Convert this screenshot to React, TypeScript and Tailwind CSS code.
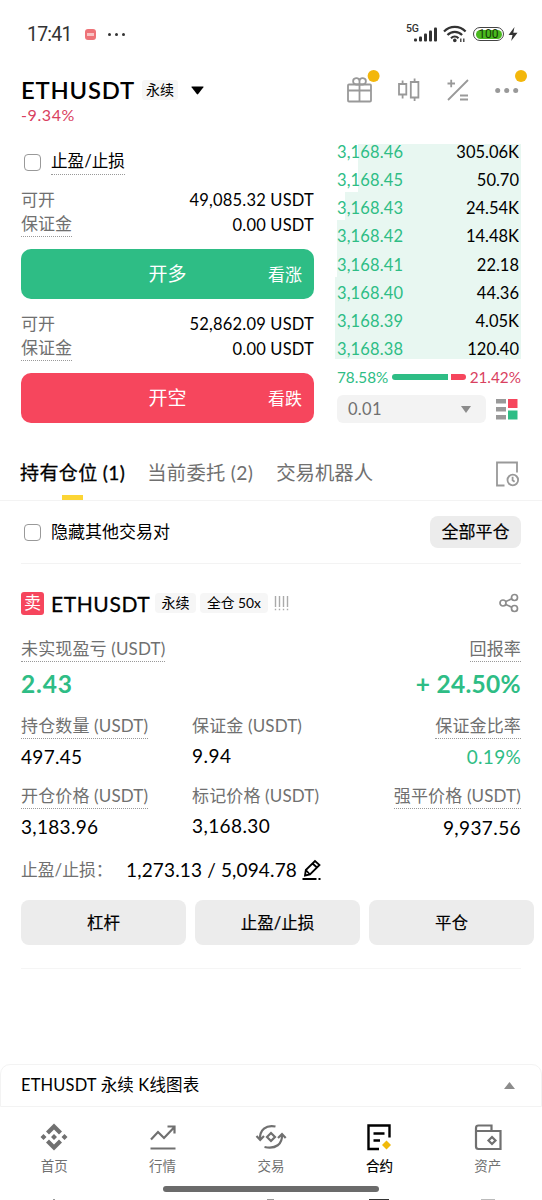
import React from "react";

type Order = { price: string; amount: string; bar: string };

const orders: Order[] = [
  { price: "3,168.46", amount: "305.06K", bar: "w-[163px]" },
  { price: "3,168.45", amount: "50.70", bar: "w-[163px]" },
  { price: "3,168.43", amount: "24.54K", bar: "w-[176px]" },
  { price: "3,168.42", amount: "14.48K", bar: "w-[184px]" },
  { price: "3,168.41", amount: "22.18", bar: "w-[184px]" },
  { price: "3,168.40", amount: "44.36", bar: "w-[186px]" },
  { price: "3,168.39", amount: "4.05K", bar: "w-[186px]" },
  { price: "3,168.38", amount: "120.40", bar: "w-[186px]" },
];

const Checkbox = () => (
  <span className="block size-[17px] shrink-0 rounded-[4px] border-[1.5px] border-[#999]" />
);

const StatusBar = () => (
  <div className="flex h-[68px] items-center pl-[27px] pr-[24px] text-[#333]">
    <span className="w-[58px] pt-[2px] font-[Roboto] text-[19.5px] tracking-[-0.8px]">17:41</span>
    <span className="flex h-[11px] w-[11px] items-center justify-center rounded-[3px] bg-[#ee7378]">
      <span className="h-[3px] w-[7px] bg-[#f9c4c4]" />
    </span>
    <span className="ml-[12px] flex gap-[4px]">
      <i className="size-[3px] rounded-full bg-[#333]" />
      <i className="size-[3px] rounded-full bg-[#333]" />
      <i className="size-[3px] rounded-full bg-[#333]" />
    </span>
    <span className="ml-auto mb-[9px] font-[Roboto] text-[10.5px] font-medium leading-none">5G</span>
    <svg className="-ml-[5px]" width="23" height="15" viewBox="0 0 23 15" fill="#333">
      <rect x="0" y="11.5" width="3" height="3" rx="1" />
      <rect x="5" y="9.5" width="3" height="5" rx="1" />
      <rect x="10" y="6.5" width="3" height="8" rx="1" />
      <rect x="15" y="3.5" width="3" height="11" rx="1" />
      <rect x="20" y="0.5" width="3" height="14" rx="1" />
    </svg>
    <svg className="ml-[6px]" width="24" height="18" viewBox="0 0 24 18" fill="none" stroke="#333" strokeWidth="2.2">
      <path d="M1 6.5a15 15 0 0 1 21.6 0M4.5 10a10 10 0 0 1 14.6 0M8 13.2a5.5 5.5 0 0 1 7.5 0" />
      <circle cx="11.8" cy="15.4" r="1.8" fill="#333" stroke="none" />
      <path d="M17.8 13.5v3.5M20.8 13.5v3.5" strokeWidth="1.3" />
    </svg>
    <span className="ml-[6px] flex h-[14px] w-[31px] items-center rounded-full border-[1.3px] border-[#444] p-[1.5px]">
      <span className="flex h-full w-full items-center justify-center rounded-full bg-[#49b81e] font-[Roboto] text-[12px] leading-none text-[#15380a]">
        100
      </span>
    </span>
    <svg className="ml-[4px]" width="10" height="16" viewBox="0 0 10 16" fill="#333">
      <path d="M6.5 1L0.5 9H4.5L3.2 15L9.5 6.8H5.3Z" />
    </svg>
  </div>
);

const Header = () => (
  <div className="flex h-[76px] justify-between pl-[21px] pr-[15px]">
    <div>
      <div className="mt-[9px] flex h-[26px] items-center">
        <h1 className="w-[121px] pt-px text-[23.8px] font-semibold leading-none tracking-[0.8px]">ETHUSDT</h1>
        <span className="flex h-[20px] w-[36px] items-center justify-center rounded-[3px] bg-[#f6f6f6] pb-px text-[14px]">
          永续
        </span>
        <svg className="ml-[13px]" width="13" height="9" viewBox="0 0 13 9">
          <path d="M1 .5h11q1 0 .4.8L7.2 8q-.7.8-1.4 0L.6 1.3Q0 .5 1 .5z" />
        </svg>
      </div>
      <p className="mt-[3px] text-[16px] leading-[18px] tracking-[0.6px] text-[#d9415f]">-9.34%</p>
    </div>
    <svg width="182" height="40" viewBox="345 68 182 40" fill="none" stroke="#999" strokeWidth="1.8">
      <rect x="348" y="84.5" width="23" height="17" rx="1" />
      <path d="M348 90.5h23M359.5 84.5v17M359.5 84.5h-3a3.2 3.2 0 1 1 3-3.5zM359.5 84.5h3a3.2 3.2 0 1 0-3-3.5" />
      <path d="M399 84h7.3v10.5H399zM402.6 80.5V84M402.6 94.5V98.5M410.8 82h7.6v15.5h-7.6zM414.6 78.5V82M414.6 97.5v3.5" />
      <path d="M448 100L468 80M447.5 83.5h7.5M451.2 79.8v7.5M460 95.5h8M460 99.5h8" />
      <g stroke="none" fill="#999">
        <circle cx="497.7" cy="90.5" r="2.5" />
        <circle cx="506.7" cy="90.5" r="2.5" />
        <circle cx="515.7" cy="90.5" r="2.5" />
      </g>
      <g stroke="none" fill="#f3b70c">
        <circle cx="373.6" cy="76" r="6" />
        <circle cx="521" cy="76" r="6" />
      </g>
    </svg>
  </div>
);

type TradeSideProps = {
  available: string;
  label: string;
  hint: string;
  color: string;
};

const TradeSide = ({ available, label, hint, color }: TradeSideProps) => (
  <div>
    <div className="flex h-[25px] items-center justify-between text-[17px]">
      <span className="text-[#707070]">可开</span>
      <span className="pt-[2px] text-[16.5px] tracking-[0.2px]">{available} USDT</span>
    </div>
    <div className="flex h-[25px] items-center justify-between text-[17px]">
      <span className="border-b border-dotted border-[#999] leading-[24px] text-[#707070]">保证金</span>
      <span className="pt-[2px] text-[16.5px] tracking-[0.2px]">0.00 USDT</span>
    </div>
    <button
      className={`mt-[12px] grid h-[50px] w-full grid-cols-3 items-center rounded-[10px] pt-px text-white ${color}`}
    >
      <span className="col-start-2 text-[19px]">{label}</span>
      <span className="pr-[12px] text-right text-[17px]">{hint}</span>
    </button>
  </div>
);

const OrderBook = () => (
  <div className="w-[186px]">
    <div className="h-[215px] overflow-hidden">
      {orders.map((o) => (
        <div
          key={o.price}
          className="relative flex h-[28.15px] items-center justify-between px-[2px] pt-[5px] text-[16.5px] leading-[15px] first:h-[20.15px] first:pb-[3px] first:pt-0"
        >
          <span className={`absolute inset-y-0 right-0 bg-[#e8f7f1] ${o.bar}`} />
          <span className="relative tracking-[0.15px] text-[#2ebd85]">{o.price}</span>
          <span className="relative">{o.amount}</span>
        </div>
      ))}
    </div>
    <div className="mt-[8px] flex h-[20px] items-center pl-[2px] text-[15.3px]">
      <span className="w-[55px] whitespace-nowrap text-[#2ebd85]">78.58%</span>
      <span className="h-[6px] w-[56px] rounded-l-full bg-[#2ebd85]" />
      <span className="ml-[3px] h-[6px] w-[15px] rounded-r-full bg-[#f6465d]" />
      <span className="ml-auto text-[#d9415f]">21.42%</span>
    </div>
    <div className="mt-[8px] flex items-center pl-[2px]">
      <div className="flex h-[28px] w-[149px] items-center justify-between rounded-[6px] bg-[#f3f3f3] pl-[11px] pr-[15px] text-[16.5px] tracking-[0.3px] text-[#707070]">
        0.01
        <svg width="10" height="7" viewBox="0 0 10 7" fill="#8c8c8c">
          <path d="M0 0h10L5 7z" />
        </svg>
      </div>
      <svg className="ml-[10px]" width="22" height="22" viewBox="0 0 22 22" fill="#999">
        <path d="M0 1h10v4.5H0zM0 9h10v4.5H0zM0 17h10v4.5H0z" />
        <path d="M12 1h9.5v9H12z" fill="#f6465d" />
        <path d="M12 12.5h9.5v9H12z" fill="#2ebd85" />
      </svg>
    </div>
  </div>
);

type MetricProps = {
  label: string;
  value: string;
  align?: string;
  dotted?: boolean;
  valueStyle?: string;
};

const Metric = ({
  label,
  value,
  align = "items-start",
  dotted = true,
  valueStyle = "mt-[4px] text-[19px] tracking-[0.3px]",
}: MetricProps) => (
  <div className={`flex flex-col ${align}`}>
    <span
      className={`whitespace-nowrap border-b border-dotted text-[17px] leading-[25px] tracking-[0.15px] text-[#707070] ${
        dotted ? "border-[#999]" : "border-transparent"
      }`}
    >
      {label}
    </span>
    <span className={`leading-[28px] ${valueStyle}`}>{value}</span>
  </div>
);

const Position = () => (
  <section className="pl-[21px]">
    <div className="mt-[25px] flex h-[28px] items-center pr-[23px]">
      <span className="flex size-[23px] items-center justify-center rounded-[3px] bg-[#f6465d] text-[17px] text-white">卖</span>
      <h2 className="ml-[7px] w-[104px] text-[21px] leading-none tracking-[0.6px] [-webkit-text-stroke:0.3px_black]">
        ETHUSDT
      </h2>
      <span className="flex h-[20px] w-[41px] items-center justify-center rounded-[4px] bg-[#f6f6f6] pb-px text-[14px]">永续</span>
      <span className="ml-[4px] flex h-[20px] w-[68px] items-center justify-center rounded-[4px] bg-[#f6f6f6] text-[13.8px]">
        全仓 50x
      </span>
      <svg className="ml-[6px]" width="15" height="15" viewBox="0 0 15 15" stroke="#aaa" strokeWidth="1.4">
        <path d="M1.5 0v11M5.5 0v11M9.5 0v11M13.5 0v11M1.5 12.7v1.6M5.5 12.7v1.6M9.5 12.7v1.6M13.5 12.7v1.6" />
      </svg>
      <svg className="ml-auto" width="20" height="20" viewBox="0 0 20 20" fill="none" stroke="#8c8c8c" strokeWidth="1.7">
        <circle cx="4" cy="10" r="3" />
        <circle cx="15.5" cy="4.5" r="3" />
        <circle cx="15.5" cy="15.5" r="3" />
        <path d="M6.8 8.6l6-2.9M6.8 11.4l6 2.9" />
      </svg>
    </div>
    <div className="mt-[19px] flex justify-between pr-[21px]">
      <Metric
        label="未实现盈亏 (USDT)"
        value="2.43"
        valueStyle="mt-[8px] mb-px text-[24.5px] font-bold tracking-[0.8px] text-[#2ebd85]"
      />
      <Metric
        label="回报率"
        value="+ 24.50%"
        align="items-end"
        valueStyle="mt-[8px] mb-px text-[24.5px] font-bold tracking-[0.3px] text-[#2ebd85]"
      />
    </div>
    <div className="mt-[14px] grid grid-cols-[171px_180px_149px] gap-y-[12px]">
      <Metric label="持仓数量 (USDT)" value="497.45" />
      <Metric label="保证金 (USDT)" value="9.94" dotted={false} valueStyle="mt-[3px] text-[19px] tracking-[0.5px]" />
      <Metric
        label="保证金比率"
        value="0.19%"
        align="items-end"
        valueStyle="mt-[4px] text-[19px] tracking-[0.3px] text-[#2ebd85]"
      />
      <Metric label="开仓价格 (USDT)" value="3,183.96" />
      <Metric
        label="标记价格 (USDT)"
        value="3,168.30"
        dotted={false}
        valueStyle="mt-[3px] text-[19px] tracking-[0.4px]"
      />
      <Metric
        label="强平价格 (USDT)"
        value="9,937.56"
        align="items-end"
        valueStyle="mt-[5px] text-[19px] tracking-[0.4px]"
      />
    </div>
    <div className="mt-[14px] flex h-[28px] items-center">
      <span className="w-[105px] text-[16.8px] text-[#707070]">止盈/止损：</span>
      <span className="text-[19px] tracking-[0.15px]">1,273.13 / 5,094.78</span>
      <svg className="ml-[5px]" width="20" height="22" viewBox="0 0 20 22" fill="none" stroke="#000" strokeWidth="1.8">
        <path d="M3 16.500l.8-5.500L13 2l4.500 4-9.500 9.500zM10.500 4.500l4.500 4M0.500 20h14M16.500 20h2M3.800 11l4.200 4.500" />
      </svg>
    </div>
    <div className="mt-[16px] grid grid-cols-3 gap-[9px] pr-[8px] text-[16.5px] [-webkit-text-stroke:0.2px_black]">
      <button className="h-[45px] rounded-[8px] bg-[#ececec] pt-px">杠杆</button>
      <button className="h-[45px] rounded-[8px] bg-[#ececec] pt-px">止盈/止损</button>
      <button className="h-[45px] rounded-[8px] bg-[#ececec] pt-px">平仓</button>
    </div>
    <div className="mr-[21px] mt-[23px] h-px bg-[#f5f5f5]" />
  </section>
);

const HomeIcon = () => (
  <svg width="28" height="28" viewBox="0 0 28 28" fill="#707070">
    <path d="M14 0.5L22 8.5L19 11.5L14 6.5L9 11.5L6 8.5zM14 27.5L22 19.5L19 16.5L14 21.5L9 16.5L6 19.5zM14 11l3 3-3 3-3-3zM3.5 11l3 3-3 3-3-3zM24.5 11l3 3-3 3-3-3z" />
  </svg>
);

const MarketIcon = () => (
  <svg width="28" height="28" viewBox="0 0 28 28" fill="none" stroke="#707070" strokeWidth="2.2">
    <path d="M2 16.5l7-7.5 6 6L25 4.5M18.5 3.5H25.5V10.5M1.5 25.5h25" />
  </svg>
);

const TradeIcon = () => (
  <svg width="32" height="28" viewBox="0 0 32 28" fill="none" stroke="#707070" strokeWidth="2.2">
    <path d="M5 16.5C4.5 7 11 1.5 20.5 3.5M1.5 13L5.2 17 9 13M27 11.5C27.5 21 21 26.5 9.5 24M23 15l4-4 3.7 4M16 10l4 4-4 4-4-4z" />
  </svg>
);

const FuturesIcon = () => (
  <svg width="28" height="28" viewBox="0 0 28 28" fill="none" stroke="#000" strokeWidth="2.4">
    <path d="M24.5 14.5V2.5H3.5V26H14M8.5 10.5h11M8.5 17.5h6.5" />
    <path d="M21.5 17.5l4.5 4.5-4.5 4.5-4.5-4.5z" fill="#f0b90b" stroke="none" />
  </svg>
);

const WalletIcon = () => (
  <svg width="28" height="28" viewBox="0 0 28 28" fill="none" stroke="#707070" strokeWidth="2.2">
    <path d="M2 9V5q0-2.5 2.5-2.500H17.500V8M2 7.500v16Q2 26 4.500 26h22V8H3M18 14l3.500 3.500L18 21l-3.500-3.500z" />
  </svg>
);

const navItems = [
  { label: "首页", icon: <HomeIcon />, active: false },
  { label: "行情", icon: <MarketIcon />, active: false },
  { label: "交易", icon: <TradeIcon />, active: false },
  { label: "合约", icon: <FuturesIcon />, active: true },
  { label: "资产", icon: <WalletIcon />, active: false },
];

const App = () => {
  return (
    <main className="flex h-[1200px] w-[542px] flex-col overflow-hidden bg-white font-[Lato,'Noto_Sans_CJK_SC',sans-serif] text-black">
      <StatusBar />
      <Header />
      <div className="flex h-[290px] shrink-0 justify-between pl-[21px] pr-[21px]">
        <div className="w-[293px]">
          <div className="mb-[12px] mt-[5px] flex h-[26px] items-center gap-[10px] pl-[3px]">
            <Checkbox />
            <span className="border-b border-dotted border-[#999] text-[16.6px] leading-[25px]">止盈/止损</span>
          </div>
          <TradeSide available="49,085.32" label="开多" hint="看涨" color="bg-[#2ebd85]" />
          <div className="h-[12px]" />
          <TradeSide available="52,862.09" label="开空" hint="看跌" color="bg-[#f6465d]" />
        </div>
        <OrderBook />
      </div>
      <div className="flex h-[67px] shrink-0 items-start border-b border-[#f3f3f3] pl-[20px] pr-[21px] text-[19.4px] leading-[28px] text-[#707070]">
        <div className="mr-[22px] flex h-full flex-col items-center whitespace-nowrap pt-[25px] text-black [-webkit-text-stroke:0.3px_black]">
          <span className="text-[19px] tracking-[0.4px]">持有仓位 (1)</span>
          <span className="mt-auto h-[5px] w-[21px] bg-[#fcd535]" />
        </div>
        <span className="mr-[23px] whitespace-nowrap pt-[25px] text-[19.3px] tracking-[0.3px]">当前委托 (2)</span>
        <span className="whitespace-nowrap pt-[25px]">交易机器人</span>
        <svg className="ml-auto mt-[26px]" width="26" height="28" viewBox="0 0 26 28" fill="none" stroke="#999" strokeWidth="1.8">
          <path d="M9.5 25.5H2V2.5h20v10" />
          <circle cx="17.8" cy="20" r="5.3" />
          <path d="M17.6 16.8v3.4l2 1.6" />
        </svg>
      </div>
      <div className="ml-[21px] mr-[21px] flex h-[63px] shrink-0 items-center border-b border-[#f3f3f3] pl-[3px] text-[17px]">
        <Checkbox />
        <span className="ml-[10px]">隐藏其他交易对</span>
        <button className="ml-auto h-[32px] w-[91px] rounded-[8px] bg-[#ececec] [-webkit-text-stroke:0.2px_black]">
          全部平仓
        </button>
      </div>
      <Position />
      <div className="mt-auto flex h-[43px] shrink-0 items-center justify-between rounded-t-[10px] border border-[#f3f3f3] pl-[20px] pr-[26px] text-[16.5px] tracking-[0.15px]">
        <span>ETHUSDT 永续 K线图表</span>
        <svg width="11" height="7" viewBox="0 0 11 7" fill="#8c8c8c">
          <path d="M5.5 0L11 7H0z" />
        </svg>
      </div>
      <nav className="grid h-[79px] shrink-0 grid-cols-5 pt-[16px] text-[13.5px]">
        {navItems.map((item) => (
          <div
            key={item.label}
            className={`flex flex-col items-center ${
              item.active ? "text-black [-webkit-text-stroke:0.2px_black]" : "text-[#707070]"
            }`}
          >
            {item.icon}
            <span className="mt-[5px] leading-[20px]">{item.label}</span>
          </div>
        ))}
      </nav>
      <div className="ml-[163px] h-[6px] w-[216px] shrink-0 rounded-full bg-[#6b6b6b]" />
      <div className="mt-[7px] grid h-px shrink-0 grid-cols-5 justify-items-center">
        <i className="h-px w-[2px] bg-[#999]" />
        <i />
        <i className="h-px w-[7px] bg-[#999]" />
        <i className="h-px w-[20px] bg-[#333]" />
        <i className="h-px w-[14px] bg-[#bbb]" />
      </div>
    </main>
  );
};

export default App;
